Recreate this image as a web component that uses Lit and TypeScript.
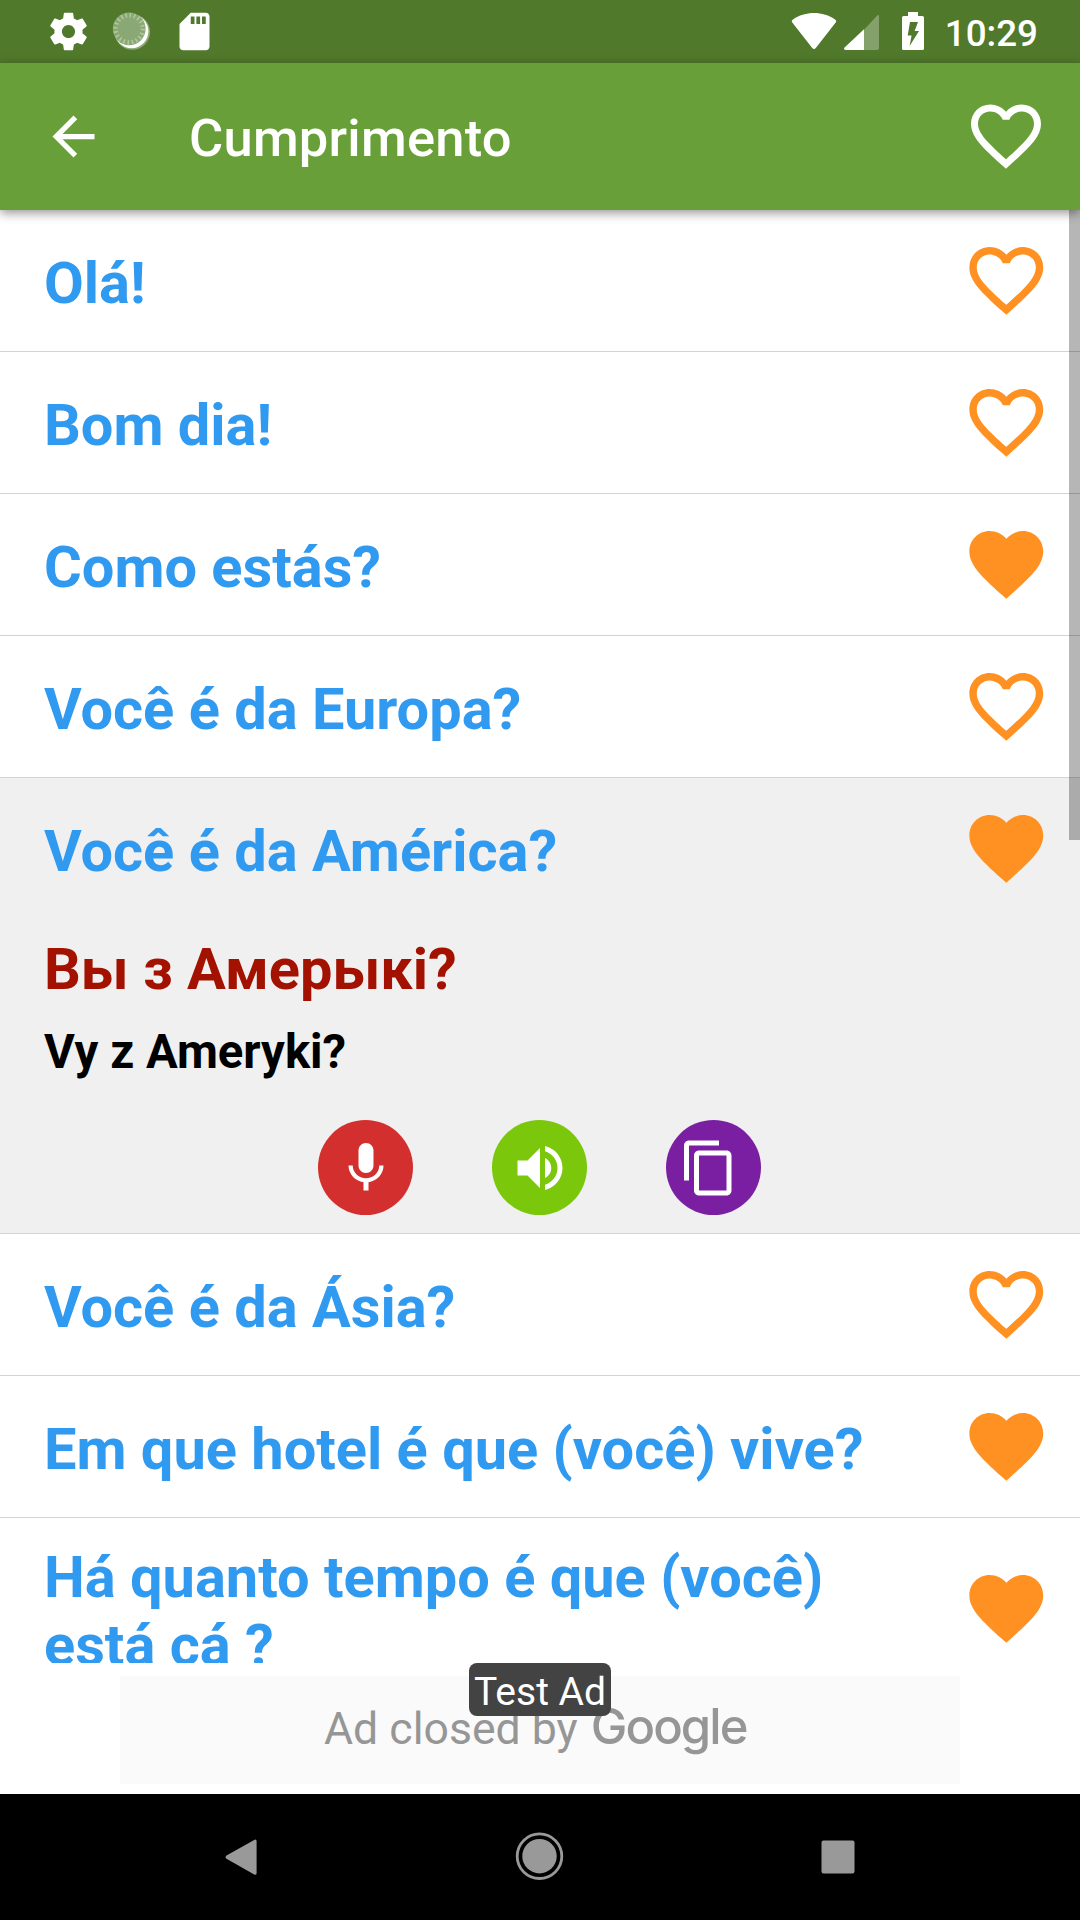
import { LitElement, html, svg, css } from "lit";
import { customElement, property } from "lit/decorators.js";

interface Phrase {
  text: string;
  favorite: boolean;
  native?: string;
  latin?: string;
}

const PHRASES: Phrase[] = [
  { text: "Olá!", favorite: false },
  { text: "Bom dia!", favorite: false },
  { text: "Como estás?", favorite: true },
  { text: "Você é da Europa?", favorite: false },
  { text: "Você é da América?", favorite: true, native: "Вы з Амерыкі?", latin: "Vy z Ameryki?" },
  { text: "Você é da Ásia?", favorite: false },
  { text: "Em que hotel é que (você) vive?", favorite: true },
  { text: "Há quanto tempo é que (você) está cá ?", favorite: true },
];

const HEART_FULL =
  "M12 21.35l-1.45-1.32C5.4 15.36 2 12.28 2 8.5 2 5.42 4.42 3 7.5 3c1.74 0 3.41.81 4.5 2.09C13.09 3.81 14.76 3 16.5 3 19.58 3 22 5.42 22 8.5c0 3.78-3.4 6.86-8.55 11.54L12 21.35z";
const HEART_LINE =
  "M16.5 3c-1.74 0-3.41.81-4.5 2.09C10.91 3.81 9.24 3 7.5 3 4.42 3 2 5.42 2 8.5c0 3.78 3.4 6.86 8.55 11.54L12 21.35l1.45-1.32C18.6 15.36 22 12.28 22 8.5 22 5.42 19.58 3 16.5 3zm-4.4 15.55l-.1.1-.1-.1C7.14 14.24 4 11.39 4 8.5 4 6.5 5.5 5 7.5 5c1.54 0 3.04.99 3.57 2.36h1.87C13.46 5.99 14.96 5 16.5 5c2 0 3.5 1.5 3.5 3.5 0 2.89-3.14 5.74-7.9 10.05z";
const MIC =
  "M12 14c1.66 0 2.99-1.34 2.99-3L15 5c0-1.66-1.34-3-3-3S9 3.34 9 5v6c0 1.66 1.34 3 3 3zm5.3-3c0 3-2.54 5.1-5.3 5.1S6.7 14 6.7 11H5c0 3.41 2.72 6.23 6 6.72V21h2v-3.28c3.28-.48 6-3.3 6-6.72h-1.7z";
const SPEAKER =
  "M3 9v6h4l5 5V4L7 9H3zm13.5 3c0-1.77-1.02-3.29-2.5-4.03v8.05c1.48-.73 2.5-2.25 2.5-4.02zM14 3.23v2.06c2.89.86 5 3.54 5 6.71s-2.11 5.85-5 6.71v2.06c4.01-.91 7-4.49 7-8.77s-2.99-7.86-7-8.77z";
const COPY =
  "M16 1H4c-1.1 0-2 .9-2 2v14h2V3h12V1zm3 4H8c-1.1 0-2 .9-2 2v14c0 1.1.9 2 2 2h11c1.1 0 2-.9 2-2V7c0-1.1-.9-2-2-2zm0 16H8V7h11v14z";
const BACK = "M20 11H7.83l5.59-5.59L12 4l-8 8 8 8 1.41-1.41L7.83 13H20v-2z";
const GEAR =
  "M19.43 12.98c.04-.32.07-.64.07-.98s-.03-.66-.07-.98l2.11-1.65c.19-.15.24-.42.12-.64l-2-3.46c-.12-.22-.39-.3-.61-.22l-2.49 1c-.52-.4-1.08-.73-1.69-.98l-.38-2.65C14.46 2.18 14.25 2 14 2h-4c-.25 0-.46.18-.49.42l-.38 2.65c-.61.25-1.17.59-1.69.98l-2.49-1c-.23-.09-.49 0-.61.22l-2 3.46c-.13.22-.07.49.12.64l2.11 1.65c-.04.32-.07.65-.07.98s.03.66.07.98l-2.11 1.65c-.19.15-.24.42-.12.64l2 3.46c.12.22.39.3.61.22l2.49-1c.52.4 1.08.73 1.69.98l.38 2.65c.03.24.24.42.49.42h4c.25 0 .46-.18.49-.42l.38-2.65c.61-.25 1.17-.59 1.69-.98l2.49 1c.23.09.49 0 .61-.22l2-3.46c.12-.22.07-.49-.12-.64l-2.11-1.65zM12 15.5c-1.93 0-3.5-1.57-3.5-3.5s1.57-3.5 3.5-3.5 3.5 1.57 3.5 3.5-1.57 3.5-3.5 3.5z";
const SD =
  "M18 2h-8L4.02 8 4 20c0 1.1.9 2 2 2h12c1.1 0 2-.9 2-2V4c0-1.1-.9-2-2-2zm-6 6h-2V4h2v4zm3 0h-2V4h2v4zm3 0h-2V4h2v4z";

const icon = (path: string, cls: string) =>
  html`<svg class=${cls} viewBox="0 0 24 24" fill="currentColor">${svg`<path d=${path}></path>`}</svg>`;

@customElement("status-bar")
class StatusBar extends LitElement {
  static styles = css`
    :host {
      display: flex;
      justify-content: space-between;
      height: 63px;
      box-sizing: border-box;
      background: #50792b;
      color: #fff;
      font: 500 36.75px/63px Roboto, sans-serif;
    }
    .group { display: flex; align-items: flex-start; }
    .left { padding-left: 46px; }
    .right { padding-right: 42px; }
    .mat { width: 45px; height: 45px; margin-top: 9px; }
    .sync { width: 42px; height: 42px; margin: 10px 20px 0 19px; }
    .signals { width: 140px; height: 63px; }
    .time { padding: 2px 0 0 15px; }
  `;
  render() {
    return html`
      <div class="group left">
        ${icon(GEAR, "mat")}
        <svg class="sync" viewBox="0 0 42 42">
          <circle cx="22.3" cy="22" r="17.8" fill="#fff" opacity=".35"></circle>
          <circle cx="21.5" cy="21.3" r="16.9" fill="#fff"></circle>
          <circle cx="19.2" cy="18.8" r="16.4" fill="#8aa873"></circle>
          <circle cx="19.2" cy="18.8" r="13.6" fill="none" stroke="#b2c7a0" stroke-width="4.4" stroke-dasharray="1.6 2.67"></circle>
        </svg>
        ${icon(SD, "mat")}
      </div>
      <div class="group right">
        <svg class="signals" viewBox="790 0 140 63" fill="#fff">
          <path d="M792.3 22.4C791.5 21.4 791.7 20.4 792.7 19.7C805 10.8 823 10.8 835.3 19.7C836.3 20.4 836.5 21.4 835.7 22.4L815.8 47.9C814.8 49.2 813.2 49.2 812.2 47.9z"></path>
          <path d="M864 29.8L877 15.8Q879 14 879 16.5V48Q879 50 877 50H864z" opacity=".3"></path>
          <path d="M864 29.3V50H845.5Q843 49.6 844.6 47.6z"></path>
          <path fill-rule="evenodd" d="M908 12H918V16H922.4Q924 16 924 17.6V48.4Q924 50 922.4 50H903.6Q902 50 902 48.4V17.6Q902 16 903.6 16H908zM910 22L907.7 35.6H911.6L909.6 46L919 31H914.6L918 22z"></path>
        </svg>
        <span class="time">10:29</span>
      </div>
    `;
  }
}

@customElement("title-bar")
class TitleBar extends LitElement {
  @property() heading = "";
  static styles = css`
    :host {
      display: flex;
      align-items: center;
      height: 147px;
      box-sizing: border-box;
      padding: 0 32px 0 42px;
      background: #689f38;
      color: #fff;
      box-shadow: 0 3px 10px rgba(0, 0, 0, 0.42);
      position: relative;
      z-index: 2;
    }
    .back { width: 63px; height: 63px; }
    .title { flex: 1; margin-left: 84px; padding-top: 3px; font: 500 52.5px/62px Roboto, sans-serif; letter-spacing: 0.22px; }
    .heart { width: 84px; height: 84px; margin-bottom: 2px; }
  `;
  render() {
    return html`${icon(BACK, "back")}<span class="title">${this.heading}</span>${icon(HEART_LINE, "heart")}`;
  }
}

@customElement("phrase-row")
class PhraseRow extends LitElement {
  @property({ attribute: false }) phrase!: Phrase;
  static styles = css`
    :host { display: block; border-bottom: 1px solid #d3d3d3; font-family: Roboto, sans-serif; font-weight: 700; }
    .open { background: #f0f0f0; height: 455px; }
    .head {
      display: flex;
      align-items: center;
      justify-content: space-between;
      min-height: 141px;
      box-sizing: border-box;
      padding: 20px 29px 20px 44px;
    }
    .text { width: 840px; color: #3099f0; font-size: 57.75px; line-height: 68px; padding-top: 5px; }
    .heart { width: 88.6px; height: 88.6px; color: #ff9122; flex: none; }
    .native { margin: 16px 0 0 44px; color: #a31200; font-size: 57.75px; line-height: 68px; }
    .latin { margin: 21px 0 0 44px; color: #000; font-size: 47.25px; line-height: 56px; }
    .actions { display: flex; justify-content: center; gap: 79px; margin-top: 40px; padding-right: 1px; }
    .action { width: 95px; height: 95px; border-radius: 50%; display: grid; place-items: center; color: #fff; }
    .mic { background: #d32f2f; }
    .speak { background: #7ac70c; }
    .copy { background: #7b1fa2; }
    .glyph { width: 60px; height: 60px; }
    .copy .glyph { margin-right: 9px; }
  `;
  render() {
    const p = this.phrase;
    return html`
      <div class=${p.native ? "open" : "closed"}>
        <div class="head">
          <div class="text">${p.text}</div>
          ${icon(p.favorite ? HEART_FULL : HEART_LINE, "heart")}
        </div>
        ${p.native
          ? html`<div class="native">${p.native}</div>
              <div class="latin">${p.latin}</div>
              <div class="actions">
                <span class="action mic">${icon(MIC, "glyph")}</span>
                <span class="action speak">${icon(SPEAKER, "glyph")}</span>
                <span class="action copy">${icon(COPY, "glyph")}</span>
              </div>`
          : null}
      </div>
    `;
  }
}

@customElement("ad-banner")
class AdBanner extends LitElement {
  static styles = css`
    :host {
      display: flex;
      justify-content: center;
      align-items: flex-start;
      height: 131px;
      box-sizing: border-box;
      padding-top: 13px;
      background: #fff;
      position: relative;
      font-family: Roboto, sans-serif;
    }
    .panel {
      width: 840px;
      height: 108px;
      box-sizing: border-box;
      padding: 25px 0 0 204px;
      display: flex;
      align-items: baseline;
      background: #fafafa;
      color: #969696;
      font-size: 44.6px;
      line-height: 52px;
      white-space: nowrap;
    }
    .brand { margin-left: 13px; font: 500 49px/52px Inter, sans-serif; letter-spacing: -1.9px; }
    .badge {
      position: absolute;
      left: 469px;
      top: 0;
      width: 142px;
      height: 53px;
      border-radius: 8px;
      background: #434343;
      color: #fff;
      font-size: 39px;
      line-height: 58px;
      text-align: center;
      white-space: nowrap;
    }
  `;
  render() {
    return html`
      <div class="panel"><span>Ad closed by</span><span class="brand">Google</span></div>
      <div class="badge">Test Ad</div>
    `;
  }
}

@customElement("nav-bar")
class NavBar extends LitElement {
  static styles = css`
    :host {
      display: flex;
      align-items: center;
      justify-content: space-between;
      height: 126px;
      box-sizing: border-box;
      padding: 0 212px;
      background: #000;
    }
    .key { width: 60px; height: 60px; display: block; }
  `;
  render() {
    return html`
      <svg class="key" viewBox="212 1827 60 60"><path d="M226.5 1858.8Q224.6 1857.2 226.5 1855.6L254.2 1839.9Q256.6 1838.8 256.6 1841.4V1873Q256.6 1875.6 254.2 1874.5z" fill="#999"></path></svg>
      <svg class="key" viewBox="0 0 60 60">
        <circle cx="29.5" cy="29.2" r="22.3" fill="none" stroke="#999" stroke-width="2.8"></circle>
        <circle cx="29.5" cy="29.2" r="17.2" fill="#999"></circle>
      </svg>
      <svg class="key" viewBox="808 1827 60 60"><rect x="821.5" y="1840.5" width="33" height="33" rx="2" fill="#999"></rect></svg>
    `;
  }
}

@customElement("app-root")
class AppRoot extends LitElement {
  static styles = css`
    :host {
      display: flex;
      flex-direction: column;
      width: 1080px;
      height: 1920px;
      overflow: hidden;
      background: #fff;
    }
    .list { height: 1453px; overflow: hidden; position: relative; }
    .scrollbar { position: absolute; right: 0; top: 0; width: 11px; height: 630px; background: rgba(0, 0, 0, 0.285); }
  `;
  render() {
    return html`
      <status-bar></status-bar>
      <title-bar heading="Cumprimento"></title-bar>
      <div class="list">
        ${PHRASES.map((p) => html`<phrase-row .phrase=${p}></phrase-row>`)}
        <div class="scrollbar"></div>
      </div>
      <ad-banner></ad-banner>
      <nav-bar></nav-bar>
    `;
  }
}
